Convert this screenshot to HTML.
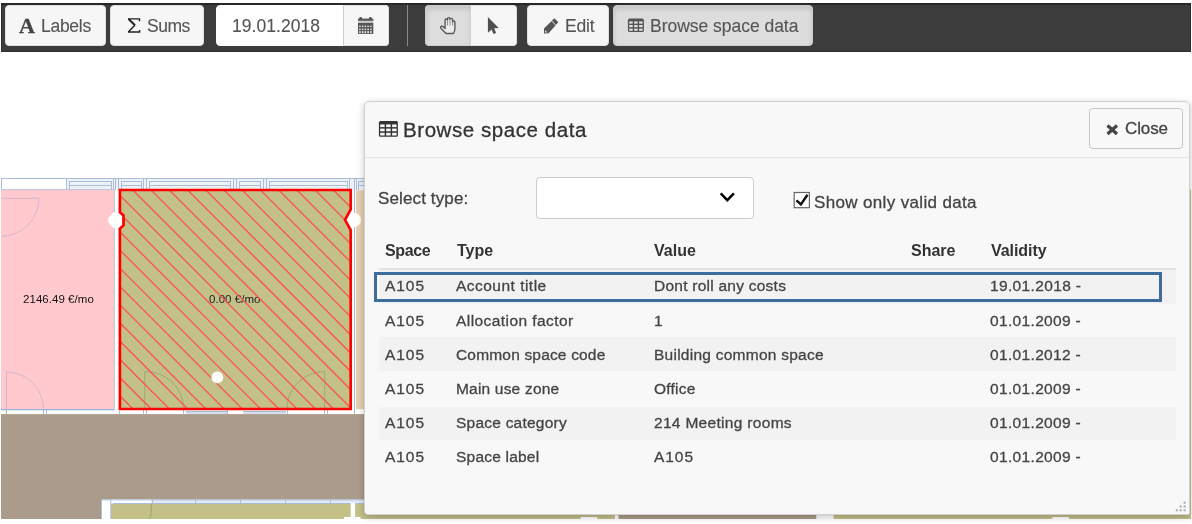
<!DOCTYPE html>
<html>
<head>
<meta charset="utf-8">
<title>Browse space data</title>
<style>
*{box-sizing:border-box;margin:0;padding:0}
html,body{width:1192px;height:524px;overflow:hidden;background:#fff}
body{position:relative;font-family:"Liberation Sans",sans-serif;color:#444;font-size:16px}
.abs{position:absolute}
#tb{position:absolute;left:1px;top:3px;width:1190px;height:49px;background:#3c3c3c;border:1px solid #2e2e2e;border-top:2px solid #282828}
.btn{position:absolute;top:5px;height:41px;background:#f6f6f6;border:1px solid #e0e0e0;border-radius:4px}
.btn.act{background:#dddddd;border-color:#cdcdcd;box-shadow:inset 0 3px 5px rgba(0,0,0,.12)}
#dlg{position:absolute;left:364px;top:101px;width:826px;height:414px;background:#f8f8f8;border:1px solid #d0d0d0;border-radius:5px 5px 2px 4px;box-shadow:0 2px 7px rgba(0,0,0,.24)}
#dlg .hd{position:absolute;left:0;top:0;width:100%;height:56px;border-bottom:1px solid #e4e4e4}
.t{position:absolute;will-change:transform;white-space:nowrap;font-size:16px;line-height:20px;color:#444;-webkit-text-stroke:.3px}
</style>
</head>
<body>

<svg class="abs" style="left:0;top:0" width="1192" height="524" viewBox="0 0 1192 524">
  <defs>
    <clipPath id="fp"><rect x="1" y="170" width="1190" height="349"/></clipPath>
    <clipPath id="room"><path d="M119.9,190 L350.7,190 L350.7,209.5 L345,219.8 L350.7,230 L350.7,409 L119.9,409 L119.9,228.6 L123.5,225.4 L123.5,215.4 L119.9,212.2 Z"/></clipPath>
  </defs>
  <g clip-path="url(#fp)">
    <!-- window strip -->
    <rect x="1" y="178" width="1190" height="12" fill="#ffffff"/>
    <rect x="66.5" y="178" width="300" height="12" fill="#edf2f8"/>
    <g stroke="#a9bdd8" stroke-width="1" fill="none">
      <path d="M1,178.5 H366 M1.5,178 V190 M66.5,178 V190 M69.5,181 V190 M69.5,181.5 H111 M69.5,185.5 H111 M111.5,181 V190 M113.5,178 V190"/>
      <path d="M115.5,178 V190 M118.5,178 V190 M119.5,411 V414"/>
      <path d="M121.5,181.5 H141 M121.5,185.5 H141 M121.5,181 V190 M141.5,181 V190 M143.5,178 V190 M146.5,178 V190"/>
      <path d="M149.5,181.5 H230 M149.5,185.5 H230 M149.5,181 V190 M230.5,181 V190 M233.500,178 V190 M236.500,178 V190"/>
      <path d="M239.5,181.5 H260 M239.5,185.5 H260 M239.5,181 V190 M260.5,181 V190 M263.5,178 V190 M266.5,178 V190"/>
      <path d="M269.5,181.5 H347 M269.5,185.5 H347 M269.5,181 V190 M347.5,181 V190 M349.5,178 V190 M354.5,178 V414 M356.5,178 V190"/>
      <path d="M358.5,181.5 H366 M358.5,185.5 H366 M358.5,181 V190"/>
    </g>
    <!-- pink room -->
    <rect x="0" y="189.7" width="114.3" height="219.8" fill="#ffc9ce" stroke="#b4bfd9" stroke-width=".9"/>
    <g stroke="#c9b1cc" stroke-width="0.8" fill="none">
      <path d="M1,198.3 H39 A38,38 0 0 1 1,236.3"/>
      <path d="M6.5,409 V372 A37,37 0 0 1 43.5,409"/>
    </g>
    <!-- beige room right -->
    <rect x="355.8" y="190.3" width="20" height="219" fill="#e4d0b1"/>
    <!-- olive room -->
    <path d="M119.9,190 L350.7,190 L350.7,209.5 L345,219.8 L350.7,230 L350.7,409 L119.9,409 L119.9,228.6 L123.5,225.4 L123.5,215.4 L119.9,212.2 Z" fill="#c3c088"/>
    <g stroke="#8f9377" stroke-width="0.8" fill="none" opacity=".75">
      <path d="M144.7,408 V371.5 A38,37 0 0 1 183.5,408"/>
      <path d="M324.7,408 V371.5 A38,37 0 0 0 287,408"/>
    </g>
    <!-- wall below rooms -->
    <g stroke="#a9bdd8" stroke-width="1" fill="none">
      <path d="M6.5,410 V414 M43.5,410 V414 M46.5,410 V414"/>
      <path d="M1,409.8 H114.3" stroke="#93abd0"/>
      <path d="M143.5,410 V414 M146.5,410 V414 M183.5,410 V414 M186,411.5 H227 M186,413 H227 M227.5,410 V414 M243,411.5 H286 M243,413 H286 M287.5,410 V414 M324.5,410 V414 M327.5,410 V414"/>
    </g>
    <!-- corridor -->
    <rect x="1" y="414.1" width="1190" height="105" fill="#ab9b8a"/>
    <!-- lower rooms -->
    <rect x="101.5" y="499.5" width="9.7" height="20" fill="#fff"/>
    <rect x="111" y="499.5" width="503.7" height="20" fill="#c3c088"/>
    <rect x="111" y="499.5" width="503.7" height="4" fill="#e3eaf3"/>
    <rect x="111" y="499.5" width="40" height="4" fill="#fff"/>
    <g stroke="#a9bdd8" stroke-width="1" fill="none">
      <path d="M101.5,519 V499.9 H614 M110.8,500 V519 M113,503.5 H614 M152.500,500 V504 M195.500,500 V504 M240.500,500 V504 M285.500,500 V504 M330.500,500 V504"/>
    </g>
    <path d="M151,504 C152,512 151,516 149,519" stroke="#99977a" stroke-width=".8" fill="none"/>
    <rect x="350.7" y="503" width="4.4" height="14" fill="#fff"/>
    <rect x="344" y="517" width="16.5" height="2" fill="#fff"/>
    <rect x="580.6" y="517" width="16.6" height="2" fill="#fff"/>
    <rect x="614.7" y="499.5" width="3.8" height="20" fill="#fff"/>
    <rect x="816.3" y="499.5" width="17.5" height="20" fill="#fff"/>
    <rect x="833.8" y="499.5" width="360" height="20" fill="#c3c088"/>
    <rect x="1052.3" y="517" width="16.6" height="2" fill="#fff"/>
    <rect x="1188" y="189.7" width="3" height="330" fill="#c3c088"/>
  </g>
</svg>

<div class="t" style="left:22.60px;top:288.7px;font-size:11.5px;color:#111;letter-spacing:0.045px;-webkit-text-stroke:0;">2146.49 €/mo</div>
<div class="t" style="left:208.90px;top:288.7px;font-size:11.5px;color:#222;letter-spacing:0.045px;-webkit-text-stroke:0;">0.00 €/mo</div>

<svg class="abs" style="left:0;top:0" width="1192" height="524" viewBox="0 0 1192 524">
  <defs><clipPath id="room2"><path d="M119.9,190 L350.7,190 L350.7,209.5 L345,219.8 L350.7,230 L350.7,409 L119.9,409 L119.9,228.6 L123.5,225.4 L123.5,215.4 L119.9,212.2 Z"/></clipPath></defs>
    <path d="M113,212.4 H119.5 L123,216 V224.5 L119.5,228 H113 L108.2,222 V218.5 Z" fill="#fff"/>
    <circle cx="354" cy="220" r="7" fill="#fff"/>
    <g clip-path="url(#room2)" stroke="#fb5252" stroke-width="1.3">
<line x1="118.00" y1="-80.02" x2="353.00" y2="154.98"/>
<line x1="118.00" y1="-61.79" x2="353.00" y2="173.21"/>
<line x1="118.00" y1="-43.56" x2="353.00" y2="191.44"/>
<line x1="118.00" y1="-25.33" x2="353.00" y2="209.67"/>
<line x1="118.00" y1="-7.10" x2="353.00" y2="227.90"/>
<line x1="118.00" y1="11.13" x2="353.00" y2="246.13"/>
<line x1="118.00" y1="29.36" x2="353.00" y2="264.36"/>
<line x1="118.00" y1="47.59" x2="353.00" y2="282.59"/>
<line x1="118.00" y1="65.82" x2="353.00" y2="300.82"/>
<line x1="118.00" y1="84.05" x2="353.00" y2="319.05"/>
<line x1="118.00" y1="102.28" x2="353.00" y2="337.28"/>
<line x1="118.00" y1="120.51" x2="353.00" y2="355.51"/>
<line x1="118.00" y1="138.74" x2="353.00" y2="373.74"/>
<line x1="118.00" y1="156.97" x2="353.00" y2="391.97"/>
<line x1="118.00" y1="175.20" x2="353.00" y2="410.20"/>
<line x1="118.00" y1="193.43" x2="353.00" y2="428.43"/>
<line x1="118.00" y1="211.66" x2="353.00" y2="446.66"/>
<line x1="118.00" y1="229.89" x2="353.00" y2="464.89"/>
<line x1="118.00" y1="248.12" x2="353.00" y2="483.12"/>
<line x1="118.00" y1="266.35" x2="353.00" y2="501.35"/>
<line x1="118.00" y1="284.58" x2="353.00" y2="519.58"/>
<line x1="118.00" y1="302.81" x2="353.00" y2="537.81"/>
<line x1="118.00" y1="321.04" x2="353.00" y2="556.04"/>
<line x1="118.00" y1="339.27" x2="353.00" y2="574.27"/>
<line x1="118.00" y1="357.50" x2="353.00" y2="592.50"/>
<line x1="118.00" y1="375.73" x2="353.00" y2="610.73"/>
<line x1="118.00" y1="393.96" x2="353.00" y2="628.96"/>
<line x1="118.00" y1="412.19" x2="353.00" y2="647.19"/>
<line x1="118.00" y1="430.42" x2="353.00" y2="665.42"/>
<line x1="118.00" y1="448.65" x2="353.00" y2="683.65"/>
<line x1="118.00" y1="466.88" x2="353.00" y2="701.88"/>
<line x1="118.00" y1="485.11" x2="353.00" y2="720.11"/>
<line x1="118.00" y1="503.34" x2="353.00" y2="738.34"/>
<line x1="118.00" y1="521.57" x2="353.00" y2="756.57"/>
    </g>
    <path d="M119.9,190 L350.7,190 L350.7,209.5 L345,219.8 L350.7,230 L350.7,409 L119.9,409 L119.9,228.6 L123.5,225.4 L123.5,215.4 L119.9,212.2 Z" fill="none" stroke="#ff0000" stroke-width="2.7" stroke-linejoin="miter"/>
    <circle cx="217.3" cy="377.4" r="5.9" fill="#fff"/>
</svg>


<div id="tb"></div>
<div class="btn" style="left:5px;width:101px"></div>
<div class="btn" style="left:110px;width:94px"></div>
<div class="btn" style="left:216px;width:173px;background:#fff;border-color:#fff"></div>
<div class="btn" style="left:343px;width:46px;border-radius:0 4px 4px 0;border-left-color:#ccc"></div>
<div class="abs" style="left:406.5px;top:5px;width:1.6px;height:41px;background:#8a8a8a"></div>
<div class="btn act" style="left:425px;width:46.5px;border-radius:4px 0 0 4px;border-right-color:#adadad"></div>
<div class="btn" style="left:471px;width:46px;border-radius:0 4px 4px 0;border-left:0"></div>
<div class="btn" style="left:527px;width:82px"></div>
<div class="btn act" style="left:613px;width:200px"></div>
<div class="t" style="left:19.40px;top:13.6px;font-size:22px;color:#444;font-weight:bold;font-family:'Liberation Serif',serif;line-height:24px;">A</div>
<div class="t" style="left:40.90px;top:16.3px;font-size:17.5px;color:#555;letter-spacing:-0.276px;-webkit-text-stroke:.12px;">Labels</div>
<div class="t" style="left:146.50px;top:16.3px;font-size:17.5px;color:#555;letter-spacing:-0.459px;-webkit-text-stroke:.12px;">Sums</div>
<div class="t" style="left:232.20px;top:16.3px;font-size:17.5px;color:#555;letter-spacing:0.056px;-webkit-text-stroke:.12px;">19.01.2018</div>
<div class="t" style="left:565.30px;top:16.3px;font-size:17.5px;color:#555;letter-spacing:-0.180px;-webkit-text-stroke:.12px;">Edit</div>
<div class="t" style="left:650.20px;top:16.3px;font-size:17.5px;color:#555;letter-spacing:-0.026px;-webkit-text-stroke:.12px;">Browse space data</div>

<div id="dlg"><div class="hd"></div></div>
<div class="t" style="left:402.70px;top:118px;font-size:20.5px;color:#333;letter-spacing:0.565px;line-height:24px;">Browse space data</div>
<div class="btn" style="left:1089px;top:108px;width:94px;height:41px;background:#f8f8f8;border-color:#c6c6c6"></div>
<div class="t" style="left:1125.40px;top:119px;font-size:17px;color:#444;letter-spacing:-0.125px;">Close</div>
<div class="t" style="left:378.40px;top:188.6px;font-size:17px;color:#444;letter-spacing:0.128px;">Select type:</div>
<div class="abs" style="left:536px;top:177px;width:218px;height:42px;background:#fff;border:1px solid #ccc;border-radius:4px"></div>
<div class="t" style="left:814.40px;top:192.5px;font-size:17px;color:#444;letter-spacing:0.347px;">Show only valid data</div>

<div class="abs" style="left:379px;top:267.8px;width:796.5px;height:1.9px;background:#e2e2e2"></div>
<div class="abs" style="left:379px;top:270px;width:796.5px;height:34px;background:#f2f2f2"></div>
<div class="abs" style="left:379px;top:337px;width:796.5px;height:34px;background:#f2f2f2"></div>
<div class="abs" style="left:379px;top:407px;width:796.5px;height:33px;background:#f2f2f2"></div>

<div class="abs" style="left:374px;top:272px;width:788px;height:30px;border:3px solid #3e6c9c"></div>
<div class="t" style="left:384.60px;top:240.6px;font-size:16px;color:#333;font-weight:bold;letter-spacing:-0.375px;-webkit-text-stroke:0;">Space</div>
<div class="t" style="left:456.90px;top:240.6px;font-size:16px;color:#333;font-weight:bold;letter-spacing:-0.039px;-webkit-text-stroke:0;">Type</div>
<div class="t" style="left:654.20px;top:240.6px;font-size:16px;color:#333;font-weight:bold;letter-spacing:0.040px;-webkit-text-stroke:0;">Value</div>
<div class="t" style="left:911.00px;top:240.6px;font-size:16px;color:#333;font-weight:bold;letter-spacing:-0.020px;-webkit-text-stroke:0;">Share</div>
<div class="t" style="left:991.40px;top:240.6px;font-size:16px;color:#333;font-weight:bold;letter-spacing:-0.058px;-webkit-text-stroke:0;">Validity</div>
<div class="t" style="left:385.40px;top:276.4px;font-size:15.5px;color:#444;letter-spacing:0.950px;">A105</div>
<div class="t" style="left:456.40px;top:276.4px;font-size:15.5px;color:#444;letter-spacing:0.479px;">Account title</div>
<div class="t" style="left:653.60px;top:276.4px;font-size:15.5px;color:#444;letter-spacing:0.244px;">Dont roll any costs</div>
<div class="t" style="left:989.90px;top:276.4px;font-size:15.5px;color:#444;letter-spacing:0.356px;">19.01.2018 -</div>
<div class="t" style="left:385.40px;top:310.57px;font-size:15.5px;color:#444;letter-spacing:0.950px;">A105</div>
<div class="t" style="left:456.40px;top:310.57px;font-size:15.5px;color:#444;letter-spacing:0.436px;">Allocation factor</div>
<div class="t" style="left:653.60px;top:310.57px;font-size:15.5px;color:#444;">1</div>
<div class="t" style="left:989.90px;top:310.57px;font-size:15.5px;color:#444;letter-spacing:0.339px;">01.01.2009 -</div>
<div class="t" style="left:385.40px;top:344.74px;font-size:15.5px;color:#444;letter-spacing:0.950px;">A105</div>
<div class="t" style="left:456.40px;top:344.74px;font-size:15.5px;color:#444;letter-spacing:0.176px;">Common space code</div>
<div class="t" style="left:653.60px;top:344.74px;font-size:15.5px;color:#444;letter-spacing:0.251px;">Building common space</div>
<div class="t" style="left:989.90px;top:344.74px;font-size:15.5px;color:#444;letter-spacing:0.339px;">01.01.2012 -</div>
<div class="t" style="left:385.40px;top:378.91px;font-size:15.5px;color:#444;letter-spacing:0.950px;">A105</div>
<div class="t" style="left:456.40px;top:378.91px;font-size:15.5px;color:#444;letter-spacing:0.193px;">Main use zone</div>
<div class="t" style="left:653.60px;top:378.91px;font-size:15.5px;color:#444;letter-spacing:0.232px;">Office</div>
<div class="t" style="left:989.90px;top:378.91px;font-size:15.5px;color:#444;letter-spacing:0.339px;">01.01.2009 -</div>
<div class="t" style="left:385.40px;top:413.08px;font-size:15.5px;color:#444;letter-spacing:0.950px;">A105</div>
<div class="t" style="left:456.40px;top:413.08px;font-size:15.5px;color:#444;letter-spacing:0.231px;">Space category</div>
<div class="t" style="left:653.60px;top:413.08px;font-size:15.5px;color:#444;letter-spacing:0.308px;">214 Meeting rooms</div>
<div class="t" style="left:989.90px;top:413.08px;font-size:15.5px;color:#444;letter-spacing:0.339px;">01.01.2009 -</div>
<div class="t" style="left:385.40px;top:447.25px;font-size:15.5px;color:#444;letter-spacing:0.950px;">A105</div>
<div class="t" style="left:456.40px;top:447.25px;font-size:15.5px;color:#444;letter-spacing:0.210px;">Space label</div>
<div class="t" style="left:653.60px;top:447.25px;font-size:15.5px;color:#444;letter-spacing:0.950px;">A105</div>
<div class="t" style="left:989.90px;top:447.25px;font-size:15.5px;color:#444;letter-spacing:0.339px;">01.01.2009 -</div>

<svg class="abs" style="left:0;top:0;pointer-events:none" width="1192" height="524" viewBox="0 0 1192 524">
  <!-- sigma -->
  <path d="M128,18.85 H139.5 V21.2 M128,32 H139.6 V29.9 M128.2,31.9 L134.9,25.3" fill="none" stroke="#222" stroke-width="1.4" stroke-linejoin="miter"/>
  <path d="M128.5,19 L135,25.3" fill="none" stroke="#222" stroke-width="2"/>
  <!-- calendar -->
  
<g fill="#555">
  <rect x="359.3" y="17.1" width="2.7" height="2.4" rx=".8"/>
  <rect x="369" y="17.1" width="2.7" height="2.4" rx=".8"/>
  <rect x="358" y="18.6" width="15.3" height="2.3"/>
  <rect x="358" y="20.9" width="15.3" height="2" fill="#c9c9c9"/>
  <rect x="358" y="22.9" width="15.3" height="11"/>
</g>
<g fill="#ddd">
<rect x="359.10" y="25.60" width="1.6" height="1.5"/><rect x="361.85" y="25.60" width="1.6" height="1.5"/><rect x="364.60" y="25.60" width="1.6" height="1.5"/><rect x="367.35" y="25.60" width="1.6" height="1.5"/><rect x="370.10" y="25.60" width="1.6" height="1.5"/><rect x="359.10" y="28.60" width="1.6" height="1.5"/><rect x="361.85" y="28.60" width="1.6" height="1.5"/><rect x="364.60" y="28.60" width="1.6" height="1.5"/><rect x="367.35" y="28.60" width="1.6" height="1.5"/><rect x="370.10" y="28.60" width="1.6" height="1.5"/><rect x="359.10" y="31.10" width="1.6" height="2.0"/><rect x="361.85" y="31.10" width="1.6" height="2.0"/><rect x="364.60" y="31.10" width="1.6" height="2.0"/><rect x="367.35" y="31.10" width="1.6" height="2.0"/><rect x="370.10" y="31.10" width="1.6" height="2.0"/></g>
  <!-- hand -->
  <path d="M445.1,28.6 V20.3 Q445.1,19 446.3,19 Q447.5,19 447.5,20.3 V18.6 Q447.5,17.6 448.75,17.6 Q450,17.6 450,18.6 V19.3 Q450,18.4 451.3,18.4 Q452.6,18.4 452.6,19.6 V22 Q452.6,21 453.8,21 Q454.9,21 454.9,22.3 V29 Q454.9,31 453.4,33.5 H446 L440.9,28.2 Q440.2,27 441.3,26.4 Q442.2,25.9 443.2,26.8 Z" fill="#ebebeb" stroke="#555" stroke-width="1.35" stroke-linejoin="round"/>
  <path d="M447.5,20 V25.5 M450,19 V25.5 M452.6,21 V25.5" stroke="#888" stroke-width=".9" fill="none"/>
  <!-- pointer -->
  <path d="M487.9,17 V32.8 L491.6,29.5 L493.5,33.9 L496.1,32.9 L494.2,28.3 L498.7,28 Z" fill="#505050"/>
  <!-- pencil -->
  <path d="M544,33.4 V28.6 L554.4,18.2 L558.3,22.2 L548.6,33.2 Z" fill="#555"/>
  <path d="M551.6,20.9 L555.7,25.1" stroke="#f0f0f0" stroke-width=".9"/>
  <path d="M545,32.4 V30.2 L547.3,32.3 Z" fill="#f0f0f0"/>
  <!-- table icon toolbar -->
  <rect x="627.9" y="18.6" width="16" height="13.4" rx="1.6" fill="#555"/><rect x="629.20" y="21.50" width="3.47" height="2.07" fill="#e6e6e6"/><rect x="634.17" y="21.50" width="3.47" height="2.07" fill="#e6e6e6"/><rect x="639.13" y="21.50" width="3.47" height="2.07" fill="#e6e6e6"/><rect x="629.20" y="25.07" width="3.47" height="2.07" fill="#e6e6e6"/><rect x="634.17" y="25.07" width="3.47" height="2.07" fill="#e6e6e6"/><rect x="639.13" y="25.07" width="3.47" height="2.07" fill="#e6e6e6"/><rect x="629.20" y="28.63" width="3.47" height="2.07" fill="#e6e6e6"/><rect x="634.17" y="28.63" width="3.47" height="2.07" fill="#e6e6e6"/><rect x="639.13" y="28.63" width="3.47" height="2.07" fill="#e6e6e6"/>
  <!-- table icon dialog -->
  <rect x="378.9" y="121" width="19" height="15.8" rx="1.6" fill="#333"/><rect x="380.20" y="124.42" width="4.47" height="2.69" fill="#f8f8f8"/><rect x="386.17" y="124.42" width="4.47" height="2.69" fill="#f8f8f8"/><rect x="392.13" y="124.42" width="4.47" height="2.69" fill="#f8f8f8"/><rect x="380.20" y="128.61" width="4.47" height="2.69" fill="#f8f8f8"/><rect x="386.17" y="128.61" width="4.47" height="2.69" fill="#f8f8f8"/><rect x="392.13" y="128.61" width="4.47" height="2.69" fill="#f8f8f8"/><rect x="380.20" y="132.81" width="4.47" height="2.69" fill="#f8f8f8"/><rect x="386.17" y="132.81" width="4.47" height="2.69" fill="#f8f8f8"/><rect x="392.13" y="132.81" width="4.47" height="2.69" fill="#f8f8f8"/>
  <!-- close x -->
  <path d="M1107.5,125.5 L1117,134 M1117,125.5 L1107.5,134" stroke="#444" stroke-width="3.2" fill="none"/>
  <!-- chevron -->
  <path d="M720.7,193.3 L727.3,200.2 L733.9,193.3" stroke="#000" stroke-width="2.4" fill="none"/>
  <!-- checkbox -->
  <rect x="794.2" y="192.5" width="15.2" height="15.2" fill="#fff" stroke="#666" stroke-width="1.2"/>
  <path d="M796.4,200.4 L800.9,204.4 L807.5,194.8" stroke="#111" stroke-width="2.4" fill="none"/>
  <!-- resize grip -->
  <g fill="#aaa">
    <rect x="1183.6" y="501.7" width="2" height="2"/>
    <rect x="1179.7" y="505.5" width="2" height="2"/><rect x="1183.6" y="505.5" width="2" height="2"/>
    <rect x="1175.8" y="509.3" width="2" height="2"/><rect x="1179.7" y="509.3" width="2" height="2"/><rect x="1183.6" y="509.3" width="2" height="2"/>
  </g>
</svg>

</body>
</html>
